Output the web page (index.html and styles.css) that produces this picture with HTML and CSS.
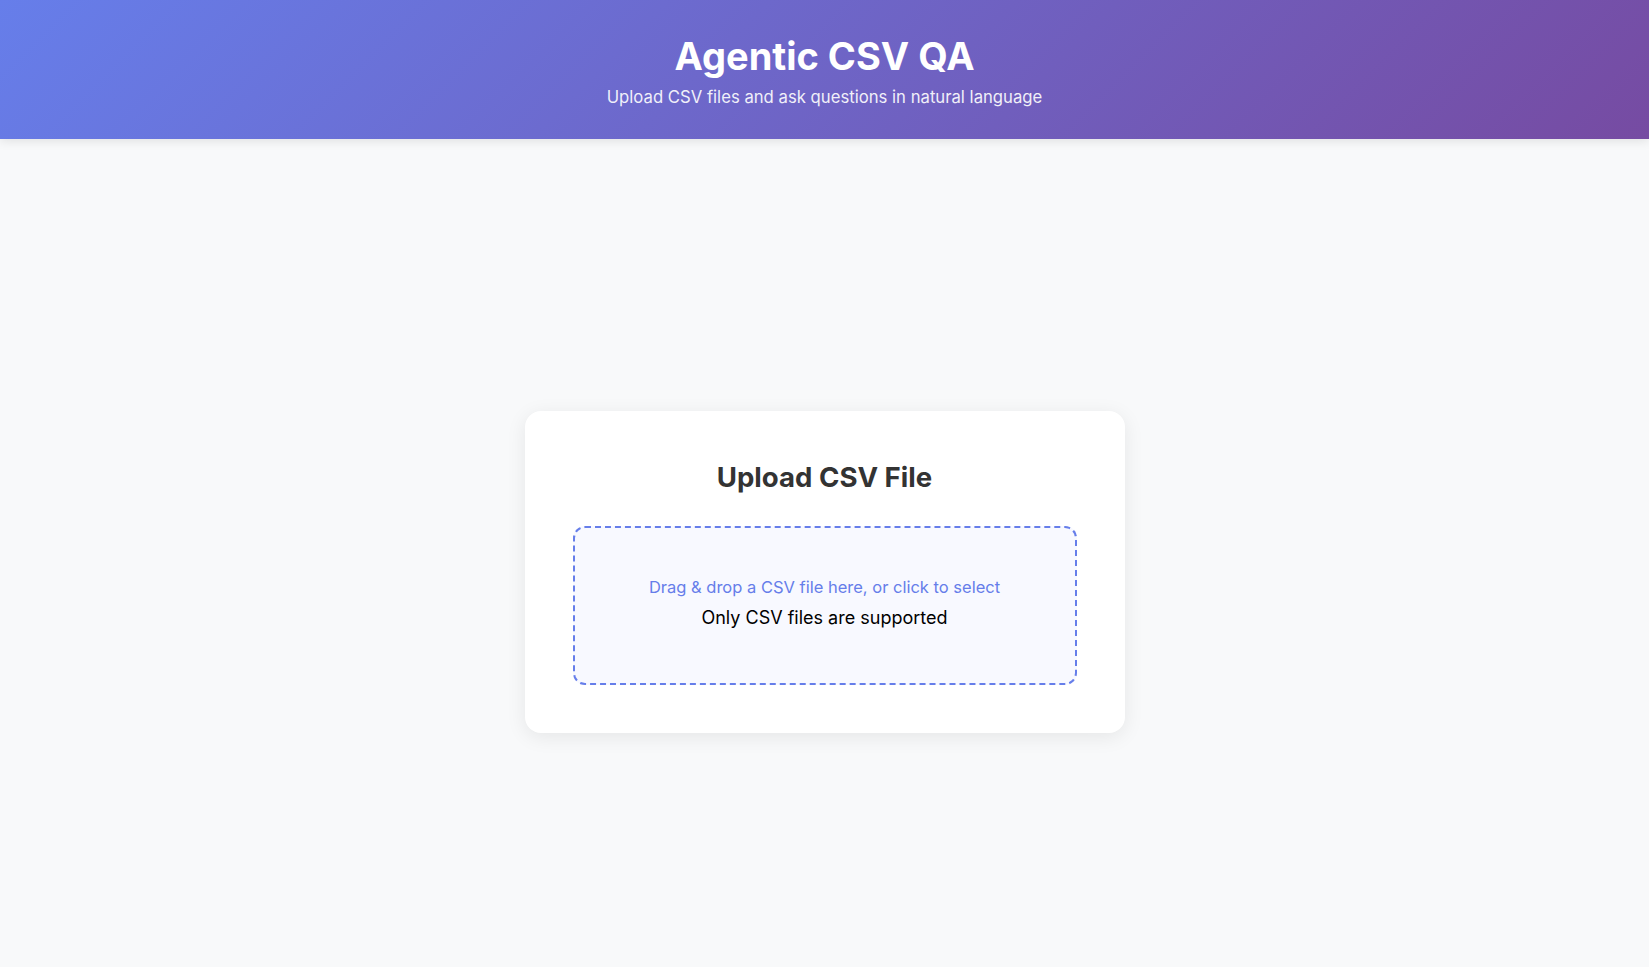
FILE: index.html
```html
<!DOCTYPE html>
<html lang="en">
<head>
<meta charset="utf-8">
<title>Agentic CSV QA</title>
<link rel="stylesheet" href="styles.css">
</head>
<body>
<div class="app">
  <header class="header">
    <h1 class="title">Agentic CSV QA</h1>
    <p class="subtitle">Upload CSV files and ask questions in natural language</p>
  </header>
  <main class="main">
    <section class="card">
      <h2 class="card-title">Upload CSV File</h2>
      <div class="dropzone">
        <p class="drop-text">Drag &amp; drop a CSV file here, or click to select</p>
        <p class="drop-note">Only CSV files are supported</p>
      </div>
    </section>
  </main>
</div>
</body>
</html>
```

FILE: styles.css
```css
* { box-sizing: border-box; }
html, body { margin: 0; padding: 0; }
body {
  font-family: Inter, "Noto Sans", "Liberation Sans", sans-serif;
  background: #f8f9fa;
  color: #333;
}
.app { min-height: 100vh; display: flex; flex-direction: column; }
.header {
  height: 139px;
  background: linear-gradient(135deg, #667eea 0%, #764ba2 100%);
  color: #fff;
  text-align: center;
  padding-top: 32px;
  box-shadow: 0 2px 10px rgba(0,0,0,0.1);
}
.title {
  margin: 0;
  font-size: 38px;
  line-height: 48px;
  font-weight: 700;
}
.subtitle {
  margin: 4px 0 0;
  font-size: 16.7px;
  line-height: 26px;
  opacity: 0.9;
}
.main {
  flex: 1;
  display: flex;
  align-items: center;
  justify-content: center;
  padding-top: 38px;
}
.card {
  width: 600px;
  background: #fff;
  border-radius: 16px;
  padding: 48px;
  box-shadow: 0 4px 20px rgba(0,0,0,0.08);
  text-align: center;
}
.card-title {
  margin: 0 0 32px;
  padding-top: 1px;
  font-size: 27.6px;
  line-height: 34px;
  font-weight: 700;
  color: #333;
}
.dropzone {
  border: 2px dashed #667eea;
  border-radius: 12px;
  background: #f8f9ff;
  padding: 47px 16px;
  height: 159px;
}
.drop-text {
  margin: 0;
  color: #667eea;
  font-size: 16.5px;
  line-height: 24px;
}
.drop-note {
  margin: 6px 0 0;
  color: #000;
  font-size: 18px;
  line-height: 26px;
}
```
